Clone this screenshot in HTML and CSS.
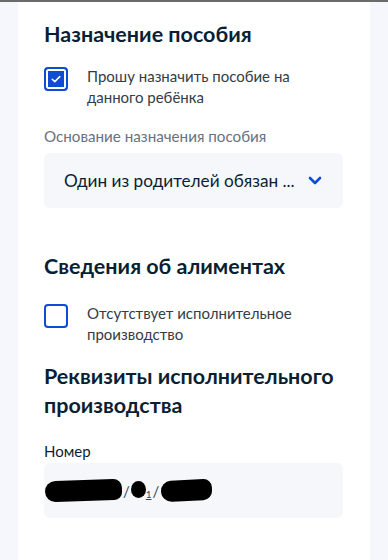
FILE: index.html
```html
<!DOCTYPE html>
<html lang="ru">
<head>
  <meta charset="UTF-8" />
  <meta name="viewport" content="width=device-width, initial-scale=1.0" />
  <title>Назначение пособия</title>
  <link rel="stylesheet" href="styles.css">
</head>
<body>
  <div class="card">
    <h2 class="title">Назначение пособия</h2>
    <label class="check-row first">
      <span class="box checked">
        <svg width="12" height="10" viewBox="0 0 12 10"><path d="M2.2 5.2l2.6 2.4L9.8 2.6" fill="none" stroke="#fff" stroke-width="1.5" stroke-linecap="round" stroke-linejoin="round"/></svg>
      </span>
      <span class="check-text">Прошу назначить пособие на данного ребёнка</span>
    </label>

    <div class="field-label gray">Основание назначения пособия</div>
    <div class="select">
      <span>Один из родителей обязан ...</span>
      <svg class="chevron" width="14" height="9" viewBox="0 0 14 9"><path d="M2 2l5 5 5-5" fill="none" stroke="#0d4cd3" stroke-width="2.6" stroke-linecap="round" stroke-linejoin="round"/></svg>
    </div>

    <h2 class="title second">Сведения об алиментах</h2>
    <label class="check-row">
      <span class="box"></span>
      <span class="check-text">Отсутствует исполнительное производство</span>
    </label>

    <h2 class="title third">Реквизиты исполнительного производства</h2>

    <div class="field-label dark">Номер</div>
    <div class="input">
      <span class="blot long">12345</span>
      <span class="sep">/</span>
      <span class="blot dot">1</span>
      <span class="sep small">1</span>
      <span class="sep">/</span>
      <span class="blot mid">1234</span>
    </div>
  </div>
</body>
</html>
```

FILE: styles.css
```css
body {
  margin: 0;
  padding: 0 18px;
  border-top: 2px solid #6b6b6b;
  background: #f5f7fc;
  font-family: Lato, 'Noto Sans', sans-serif;
  color: #0b1f33;
  height: 558px;
  overflow: hidden;
}

.card {
  background: #fff;
  height: 100%;
  padding: 18px 27px 0 26px;
}

.title {
  margin: 0;
  font-size: 21.5px;
  line-height: 29px;
  font-weight: 700;
  color: #0b1f33;
}

.title.second {
  margin-top: 44px;
}

.title.third {
  margin-top: 17px;
}

.check-row {
  display: flex;
  align-items: flex-start;
  margin-top: 22px;
}

.check-row.first {
  margin-top: 17px;
}

.box {
  width: 24px;
  height: 24px;
  box-sizing: border-box;
  border: 2px solid #0d4cd3;
  border-radius: 4px;
  flex-shrink: 0;
  margin-top: 1px;
  display: flex;
  align-items: center;
  justify-content: center;
  background: #fff;
}

.box.checked {
  box-shadow: inset 0 0 0 2px #fff;
  background: #0d4cd3;
}

.check-text {
  margin-left: 19px;
  font-size: 15px;
  line-height: 21px;
  color: #333c47;
  max-width: 220px;
}

.field-label {
  font-size: 15.2px;
  line-height: 20px;
}

.field-label.gray {
  margin-top: 18px;
  color: #66727f;
}

.field-label.dark {
  margin-top: 21px;
  font-size: 15px;
  color: #0b1f33;
}

.select {
  margin-top: 7px;
  height: 55px;
  background: #f5f7fa;
  border-radius: 6px;
  display: flex;
  align-items: center;
  padding: 0 21px 0 20px;
  font-size: 17.2px;
  color: #0b1f33;
}

.select span {
  flex: 1;
}

.input {
  margin-top: 2px;
  height: 55px;
  background: #f5f7fa;
  border-radius: 6px;
  display: flex;
  align-items: center;
  padding-left: 1px;
  font-size: 15px;
  color: #3a4a5c;
}

.blot {
  display: inline-block;
  background: #000;
  color: #000;
  overflow: hidden;
  font-size: 10px;
}

.blot.long {
  width: 77px;
  height: 21px;
  border-radius: 12px 10px 9px 12px;
  transform: rotate(-2deg);
}

.blot.dot {
  width: 15px;
  height: 17px;
  border-radius: 50%;
  margin-top: -3px;
}

.blot.mid {
  width: 51px;
  height: 21px;
  border-radius: 11px 9px 10px 12px;
  transform: rotate(-3deg);
  margin-left: 1px;
}

.sep {
  margin: 0 1px;
}

.sep.small {
  font-size: 10px;
  margin: 6px 0 0 0;
  text-decoration: underline;
}
```
